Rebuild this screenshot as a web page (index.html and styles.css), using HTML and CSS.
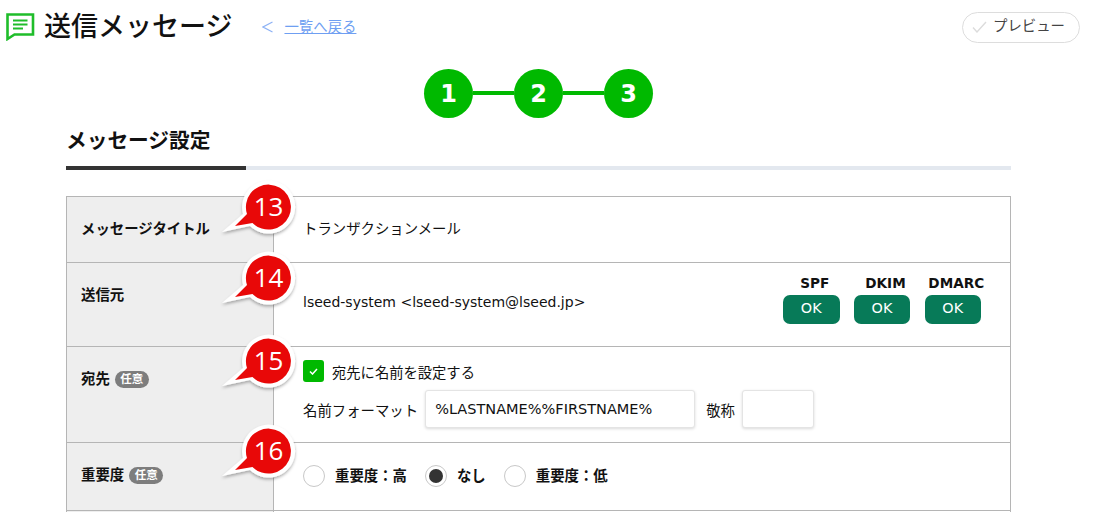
FILE: index.html
```html
<!DOCTYPE html>
<html lang="ja">
<head>
<meta charset="utf-8">
<title>送信メッセージ</title>
<link rel="stylesheet" href="styles.css">
</head>
<body>
<header class="top">
  <svg class="top-icon" width="29" height="28" viewBox="0 0 29 28" fill="none"><path d="M1.5 1.5H27V21.5H8.5L1.5 26Z" stroke="#1fbd2a" stroke-width="2.6"/><path d="M7 7.5H21.5M7 11.5H21.5M7 15.5H17" stroke="#1fbd2a" stroke-width="2"/></svg>
  <h1 class="page-title">送信メッセージ</h1>
  <svg class="back-icon" width="11" height="12" viewBox="0 0 11 12" fill="none"><path d="M10.5 1L1 6L10.5 11" stroke="#8db2f5" stroke-width="1.2"/></svg>
  <a class="back-link" href="#">一覧へ戻る</a>
  <button class="preview" type="button">
    <svg width="15" height="12" viewBox="0 0 15 12" fill="none"><path d="M1 6.5L5 11L14 1" stroke="#dcdcdc" stroke-width="1.4"/></svg>
    <span>プレビュー</span>
  </button>
</header>

<main class="content">
  <div class="steps">
    <span class="step">1</span><span class="step-line"></span>
    <span class="step">2</span><span class="step-line"></span>
    <span class="step">3</span>
  </div>

  <h2 class="section-title"><span>メッセージ設定</span></h2>

  <div class="table">
    <div class="row">
      <div class="label">メッセージタイトル
        <svg class="pin pin-13" width="80" height="64" viewBox="0 0 80 64"><use href="#bubble"/><text x="55.5" y="40" class="pin-num">13</text></svg>
      </div>
      <div class="value value-title">トランザクションメール</div>
    </div>

    <div class="row">
      <div class="label">送信元
        <svg class="pin pin-14" width="80" height="64" viewBox="0 0 80 64"><use href="#bubble"/><text x="55.5" y="40" class="pin-num">14</text></svg>
      </div>
      <div class="value value-from">
        <span class="from-text">lseed-system &lt;lseed-system@lseed.jp&gt;</span>
        <div class="auth">
          <div class="auth-item"><b>SPF</b><span class="ok">OK</span></div>
          <div class="auth-item"><b>DKIM</b><span class="ok">OK</span></div>
          <div class="auth-item"><b>DMARC</b><span class="ok">OK</span></div>
        </div>
      </div>
    </div>

    <div class="row">
      <div class="label">宛先 <span class="tag">任意</span>
        <svg class="pin pin-15" width="80" height="64" viewBox="0 0 80 64"><use href="#bubble"/><text x="55.5" y="40" class="pin-num">15</text></svg>
      </div>
      <div class="value value-to">
        <div class="check-row">
          <span class="check"><svg width="9" height="7" viewBox="0 0 9 7" fill="none"><path d="M1 3.5L3.5 6L8 1" stroke="#fff" stroke-width="1.5"/></svg></span>
          <span>宛先に名前を設定する</span>
        </div>
        <div class="name-row">
          <span>名前フォーマット</span>
          <span class="input input-name">%LASTNAME%%FIRSTNAME%</span>
          <span class="honorific">敬称</span>
          <span class="input input-short"></span>
        </div>
      </div>
    </div>

    <div class="row">
      <div class="label">重要度 <span class="tag">任意</span>
        <svg class="pin pin-16" width="80" height="64" viewBox="0 0 80 64"><use href="#bubble"/><text x="55.5" y="40" class="pin-num">16</text></svg>
      </div>
      <div class="value value-radio">
        <span class="radio"></span><b class="radio-label">重要度：高</b>
        <span class="radio on"></span><b class="radio-label">なし</b>
        <span class="radio"></span><b class="radio-label">重要度：低</b>
      </div>
    </div>

    <div class="row row-next">
      <div class="label"></div>
      <div class="value"></div>
    </div>
  </div>
</main>

<svg class="defs" width="0" height="0">
  <defs>
    <filter id="sh" x="-20%" y="-20%" width="140%" height="140%"><feDropShadow dx="0" dy="2" stdDeviation="1.6" flood-color="#000" flood-opacity=".3"/></filter>
    <g id="bubble">
      <g filter="url(#sh)">
        <path d="M9 56L30 38A26.5 26.5 0 1 1 37 50Z" fill="#fff"/>
      </g>
      <path d="M22 50L34 38A22.5 22.5 0 1 1 39.5 47Z" fill="#e80808"/>
    </g>
  </defs>
</svg>
</body>
</html>
```
FILE: styles.css
```css
* { box-sizing: border-box; }
html, body { height: 512px; overflow: hidden; }
body {
  margin: 0;
  background: #fff;
  color: #111;
  font-family: "DejaVu Sans", "Noto Sans CJK JP", sans-serif;
  font-size: 14.4px;
}

.top {
  display: flex;
  align-items: center;
  height: 54px;
  padding: 0 13px 0 6px;
}
.page-title {
  margin: 0 0 0 9px;
  font-size: 27px;
  font-weight: 500;
  line-height: 54px;
}
.back-icon { margin-left: 30px; }
.back-link {
  margin: 0 0 4px 11px;
  color: #6f9ff2;
  font-size: 14.4px;
}
.preview {
  display: flex;
  align-items: center;
  gap: 6px;
  width: 118px;
  height: 31px;
  margin-left: auto;
  padding: 0 0 0 9px;
  border: 1px solid #ddd;
  border-radius: 16px;
  background: #fff;
  color: #444;
  font: inherit;
}
.preview span { margin-bottom: 5px; }

.content { margin: 0 82px 0 66px; }

.steps {
  display: flex;
  align-items: center;
  justify-content: center;
  height: 49px;
  margin-top: 15px;
}
.step {
  display: flex;
  align-items: center;
  justify-content: center;
  width: 49px;
  height: 49px;
  border-radius: 50%;
  background: #00b900;
  color: #fff;
  font-size: 24px;
  font-weight: 700;
}
.step-line {
  width: 41px;
  height: 4px;
  margin-top: -1px;
  background: #00b900;
}

.section-title {
  height: 42px;
  margin: 10px 0 0;
  border-bottom: 4px solid #e3e8ef;
  font-size: 20.7px;
  font-weight: 700;
  line-height: 26px;
}
.section-title span {
  display: block;
  width: 180px;
  height: 42px;
  border-bottom: 4px solid #333;
}

.table {
  margin-top: 26px;
  border: 1px solid #b5b5b5;
  border-bottom: 0;
}
.row {
  display: grid;
  grid-template-columns: 207px 1fr;
  border-bottom: 1px solid #b5b5b5;
}
.label {
  position: relative;
  padding: 22px 14px 0;
  border-right: 1px solid #b5b5b5;
  background: #eee;
  font-size: 14.4px;
  font-weight: 700;
  line-height: 20px;
}
.tag {
  display: inline-block;
  padding: 0 5.5px;
  height: 17px;
  border-radius: 9px;
  background: #7d7d7d;
  color: #fff;
  font-size: 11.5px;
  line-height: 17px;
  vertical-align: 1px;
}
.pin { position: absolute; left: 146px; overflow: visible; }
.pin-13 { top: -21px; }
.pin-14 { top: -16px; }
.pin-15 { top: -17px; }
.pin-16 { top: -23px; }
.pin-num {
  fill: #fff;
  font-family: "Open Sans", sans-serif;
  font-size: 26px;
  font-weight: 400;
  text-anchor: middle;
}

.value { padding-left: 29px; }
.value-title { padding-top: 22px; height: 65px; line-height: 20px; }
.value-from {
  display: flex;
  align-items: center;
  justify-content: space-between;
  height: 83px;
  padding-right: 29px;
  padding-bottom: 5px;
  font-size: 14px;
}
.auth { display: flex; align-self: flex-start; gap: 14.25px; margin-top: 10px; }
.auth-item {
  display: flex;
  flex-direction: column;
  align-items: center;
  width: 56.5px;
}
.auth-item b {
  height: 20px;
  margin-bottom: 2px;
  padding-left: 7px;
  font-size: 13.6px;
  line-height: 20px;
  white-space: nowrap;
}
.ok {
  display: block;
  width: 100%;
  height: 29px;
  border-radius: 7px;
  background: #077a58;
  color: #fff;
  font-size: 14.4px;
  line-height: 26px;
  text-align: center;
}

.value-to { height: 95px; padding-top: 13px; }
.check-row {
  display: flex;
  align-items: center;
  gap: 8px;
  height: 22px;
  font-size: 14.3px;
}
.check {
  display: flex;
  align-items: center;
  justify-content: center;
  width: 21px;
  height: 22px;
  border-radius: 3px;
  background: #00b900;
}
.name-row {
  display: flex;
  align-items: center;
  margin-top: 8px;
}
.input {
  display: block;
  height: 38px;
  border: 1px solid #e4e4e4;
  border-radius: 3px;
  background: #fff;
  box-shadow: 0 1px 3px rgba(0, 0, 0, .15);
  line-height: 36px;
}
.input-name { width: 270px; margin-left: 7px; padding-left: 9px; font-size: 14.5px; }
.honorific { margin-left: 11px; }
.input-short { width: 72px; margin-left: 7px; }

.value-radio {
  display: flex;
  align-items: center;
  height: 67px;
  padding-bottom: 2px;
}
.radio {
  flex: none;
  position: relative;
  width: 22px;
  height: 22px;
  border: 1px solid #c8c8c8;
  border-radius: 50%;
  background: #fff;
}
.radio.on::after {
  content: "";
  position: absolute;
  inset: 3px;
  border-radius: 50%;
  background: #333;
}
.radio-label {
  margin: 0 18px 2px 10px;
  font-size: 14.4px;
}
.row-next { height: 1px; border-bottom: 0; }
.row-next .label { padding: 0; }
.defs { position: absolute; }
```
